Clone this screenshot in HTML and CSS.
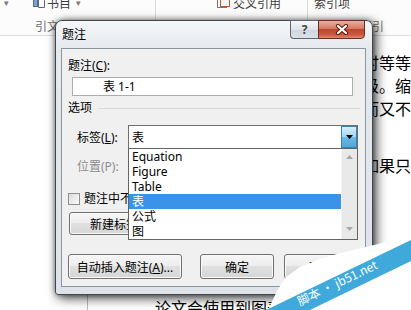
FILE: index.html
```html
<!DOCTYPE html>
<html lang="zh-CN">
<head>
    <meta charset="UTF-8">
    <meta name="viewport" content="width=device-width, initial-scale=1.0">
    <title>题注</title>
    <link rel="stylesheet" href="styles.css">
</head>
<body>
    <div class="ribbon">
        <div class="rb-row">
            <span class="rb-arrow">▾</span>
            <span class="rb-item rb-biblio">
                <svg class="rb-icon" width="12" height="12" viewBox="0 0 12 12"><rect x="0.5" y="1.5" width="4" height="9" fill="#7da2ce" stroke="#4d6f99"/><path d="M5.5 2.5h4l2 2v7h-6z" fill="#fff" stroke="#666"/></svg>
                书目 <span class="rb-caret">▾</span>
            </span>
            <span class="rb-sep"></span>
            <span class="rb-item rb-xref">
                <svg class="rb-icon" width="14" height="12" viewBox="0 0 14 12"><rect x="0.5" y="0.5" width="9" height="11" fill="#fff" stroke="#777"/><rect x="3.5" y="3.5" width="9" height="7" fill="#f6f6f6" stroke="#b85a2a"/></svg>
                交叉引用
            </span>
            <span class="rb-sep"></span>
            <span class="rb-item rb-index">索引项</span>
        </div>
        <div class="rb-labels">
            <span class="rb-label-cite">引文与书目</span>
            <span class="rb-label-index">索引</span>
        </div>
    </div>

    <div class="doc">
        <p>时等等</p>
        <p>级。缩</p>
        <p>而又不</p>
        <p class="para-gap">如果只</p>
    </div>
    <div class="doc-bottom">
        <span class="margin-mark"></span>
        <span class="doc-bottom-text">论文会使用到图表</span>
    </div>

    <div class="dialog">
        <div class="titlebar">
            <span class="title">题注</span>
            <div class="caption-btns">
                <span class="cap-btn help">?</span>
                <span class="cap-btn close">
                    <svg width="14" height="11" viewBox="0 0 14 11"><path d="M3 2L11 9M11 2L3 9" stroke="#5b1a10" stroke-width="4.2" stroke-linecap="round"/><path d="M3 2L11 9M11 2L3 9" stroke="#fff" stroke-width="2.2" stroke-linecap="round"/></svg>
                </span>
            </div>
        </div>
        <div class="client">
            <div class="label">题注(<u>C</u>):</div>
            <div class="text-input">表 1-1</div>
            <div class="group-head"><span>选项</span><span class="group-line"></span></div>
            <div class="field-row">
                <span class="field-label">标签(<u>L</u>):</span>
                <div class="combo">
                    <span class="combo-value">表</span>
                    <span class="combo-btn">
                        <svg width="7" height="4" viewBox="0 0 7 4"><path d="M0 0h7L3.5 4z" fill="#000"/></svg>
                    </span>
                    <div class="combo-list">
                        <ul class="combo-items">
                            <li>Equation</li>
                            <li>Figure</li>
                            <li>Table</li>
                            <li class="selected">表</li>
                            <li>公式</li>
                            <li>图</li>
                        </ul>
                        <div class="scrollbar">
                            <svg width="7" height="4" viewBox="0 0 7 4"><path d="M0 4h7L3.5 0z" fill="#a8a8a8"/></svg>
                            <svg width="7" height="4" viewBox="0 0 7 4"><path d="M0 0h7L3.5 4z" fill="#a8a8a8"/></svg>
                        </div>
                    </div>
                </div>
            </div>
            <div class="field-row disabled">
                <span class="field-label">位置(P):</span>
            </div>
            <div class="check-row"><span class="checkbox"></span>题注中不包含标签(<u>E</u>)</div>
            <button class="btn btn-new">新建标签(<u>N</u>)...</button>
            <div class="btn-row">
                <button class="btn btn-auto">自动插入题注(<u>A</u>)...</button>
                <button class="btn btn-ok">确定</button>
                <button class="btn btn-cancel">取消</button>
            </div>
        </div>
    </div>

    <svg class="watermark" width="411" height="310" viewBox="0 0 411 310">
        <defs>
            <clipPath id="band"><polygon points="266,310 411,240 411,261 310,310"/></clipPath>
        </defs>
        <polygon points="268,310 277,291 286,277 300,267 320,259 337,254 370,246 411,236 411,310" fill="#fff"/>
        <polygon points="266,310 411,240 411,261 310,310" fill="#3ea9da"/>
        <g clip-path="url(#band)">
            <text transform="translate(300 306) rotate(-25.8)" font-size="12" fill="#fff" font-family="Noto Sans CJK SC, sans-serif">脚本 · jb51.net</text>
        </g>
    </svg>
</body>
</html>
```

FILE: styles.css
```css
* {
    box-sizing: border-box;
}
html, body {
    margin: 0;
}
body {
    position: relative;
    width: 411px;
    height: 310px;
    overflow: hidden;
    background-color: #fff;
    font-family: "Noto Sans CJK SC", sans-serif;
    color: #000;
}

/* word ribbon behind the dialog */
.ribbon {
    display: flex;
    flex-direction: column;
    height: 36px;
    border-bottom: 1px solid #dcdddf;
    background-color: #fcfcfc;
    font-size: 12px;
    color: #3c3c3c;
}
.rb-row {
    display: flex;
    align-items: center;
    height: 20px;
    margin-top: -8px;
    white-space: nowrap;
}
.rb-arrow {
    width: 33px;
    padding-left: 4px;
    font-size: 9px;
    color: #777;
}
.rb-item {
    display: flex;
    align-items: center;
    gap: 2px;
}
.rb-biblio {
    width: 122px;
}
.rb-caret {
    font-size: 9px;
    color: #777;
    margin-left: 3px;
}
.rb-xref {
    width: 90px;
    margin-left: 61px;
}
.rb-index {
    margin-left: 6px;
}
.rb-sep {
    align-self: flex-start;
    width: 1px;
    height: 22px;
    margin-top: 8px;
    background-color: #dadbdc;
}
.rb-labels {
    display: flex;
    height: 14px;
    margin-top: 7px;
    line-height: 14px;
    font-size: 12px;
    color: #6d6d6d;
    white-space: nowrap;
}
.rb-label-cite {
    margin-left: 35px;
}
.rb-label-index {
    margin-left: 265px;
}

/* document text */
.doc {
    margin-top: 15px;
    padding-left: 363px;
    font-size: 16px;
    line-height: 23px;
    white-space: nowrap;
}
.doc p {
    margin: 0;
}
.doc .para-gap {
    margin-top: 34px;
}
.doc-bottom {
    display: flex;
    align-items: flex-start;
    height: 23px;
    margin-top: 119px;
    white-space: nowrap;
}
.margin-mark {
    width: 1px;
    height: 23px;
    margin-left: 87px;
    margin-top: -6px;
    background-color: #bdbdbd;
}
.doc-bottom-text {
    margin-left: 67px;
    font-size: 16px;
    line-height: 23px;
}

/* caption dialog */
.dialog {
    position: absolute;
    left: 55px;
    top: 20px;
    width: 318px;
    height: 275px;
    display: flex;
    flex-direction: column;
    border: 1px solid #3f4750;
    border-radius: 7px 7px 3px 3px;
    background: linear-gradient(#f4f6f8, #e4e9ee 30px, #dde3e9);
    box-shadow: 3px 3px 12px rgba(0,0,0,0.75), 0 0 5px rgba(0,0,0,0.4);
    font-family: "Noto Sans", "Noto Sans CJK SC", sans-serif;
    font-size: 12px;
}
.titlebar {
    position: relative;
    flex: none;
    height: 27px;
}
.title {
    display: block;
    padding-left: 6px;
    line-height: 27px;
}
.caption-btns {
    position: absolute;
    top: -1px;
    right: 7px;
    display: flex;
}
.cap-btn {
    display: flex;
    align-items: center;
    justify-content: center;
    height: 19px;
    border: 1px solid #5d6670;
}
.help {
    width: 28px;
    border-right: none;
    border-radius: 0 0 0 4px;
    background: linear-gradient(#f5f7f9, #dfe4ea 50%, #cfd6de 51%, #dbe1e7);
    font-weight: bold;
    color: #444;
    line-height: 17px;
}
.close {
    width: 47px;
    border-color: #6e2b22;
    border-radius: 0 0 4px 0;
    background: linear-gradient(#eab0a2, #d57a64 45%, #c2452e 50%, #c9573f 80%, #e08a70);
}
.client {
    flex: 1;
    margin: 0 6px 7px 5px;
    border: 1px solid #8a96a2;
    background-color: #f0f0f0;
}
.label {
    margin: 10px 0 0 6px;
    line-height: 14px;
}
.text-input {
    width: 281px;
    height: 19px;
    margin: 4px 0 0 10px;
    padding-left: 30px;
    border: 1px solid #abadb3;
    background-color: #fff;
    line-height: 17px;
}
.group-head {
    display: flex;
    align-items: center;
    margin: 5px 0 0 6px;
    line-height: 14px;
}
.group-line {
    flex: 1;
    height: 1px;
    margin: 0 5px 0 6px;
    background-color: #d8dcdf;
}
.field-row {
    display: flex;
    align-items: center;
    height: 24px;
    margin-top: 10px;
}
.field-row.disabled {
    margin-top: 5px;
    color: #8d8d8d;
}
.field-label {
    width: 51px;
    margin-left: 15px;
}
.combo {
    position: relative;
    display: flex;
    align-items: center;
    width: 230px;
    height: 24px;
    border: 1px solid #6f6f6f;
    background-color: #fff;
}
.combo-value {
    flex: 1;
    padding-left: 3px;
}
.combo-btn {
    display: flex;
    align-items: center;
    justify-content: center;
    width: 16px;
    height: 22px;
    border: 1px solid #3c7fb1;
    background: linear-gradient(#d4eefb, #a2d6f2 50%, #6cbbe6 51%, #4ea7db);
}
.combo-list {
    position: absolute;
    left: -1px;
    top: 22px;
    z-index: 2;
    display: flex;
    width: 230px;
    height: 92px;
    border: 1px solid #646464;
    background-color: #fff;
}
.combo-items {
    flex: 1;
    margin: 0;
    padding: 0;
    list-style: none;
}
.combo-items li {
    height: 15px;
    padding-left: 3px;
    line-height: 15px;
}
.combo-items li.selected {
    background-color: #3a93e9;
    color: #fff;
}
.scrollbar {
    display: flex;
    flex-direction: column;
    justify-content: space-between;
    align-items: center;
    width: 16px;
    padding: 6px 0 8px;
    border-left: 1px solid #f4f4f4;
    background-color: #e9e9e9;
}
.check-row {
    display: flex;
    align-items: center;
    height: 14px;
    margin: 14px 0 0 6px;
    line-height: 14px;
    white-space: nowrap;
}
.checkbox {
    width: 12px;
    height: 12px;
    margin-right: 4px;
    border: 1px solid #8e8f8f;
    background: linear-gradient(135deg, #dcdcdc, #fbfbfb);
}
.btn {
    padding: 0;
    border: 1px solid #707070;
    border-radius: 3px;
    background: linear-gradient(#f6f6f6, #eeeeee 45%, #e0e0e0 50%, #d6d6d6);
    box-shadow: inset 0 0 0 1px #fbfbfb;
    font-family: inherit;
    font-size: 12px;
    color: #000;
    white-space: nowrap;
}
.btn-new {
    display: block;
    width: 116px;
    height: 23px;
    margin: 6px 0 0 7px;
}
.btn-row {
    display: flex;
    margin: 19px 0 0 6px;
}
.btn-row .btn {
    height: 25px;
}
.btn-auto {
    width: 114px;
}
.btn-ok {
    width: 74px;
    margin-left: 18px;
}
.btn-cancel {
    width: 74px;
    margin-left: 10px;
}

/* page curl watermark over the corner */
.watermark {
    position: absolute;
    left: 0;
    top: 0;
    z-index: 5;
    pointer-events: none;
}
```
